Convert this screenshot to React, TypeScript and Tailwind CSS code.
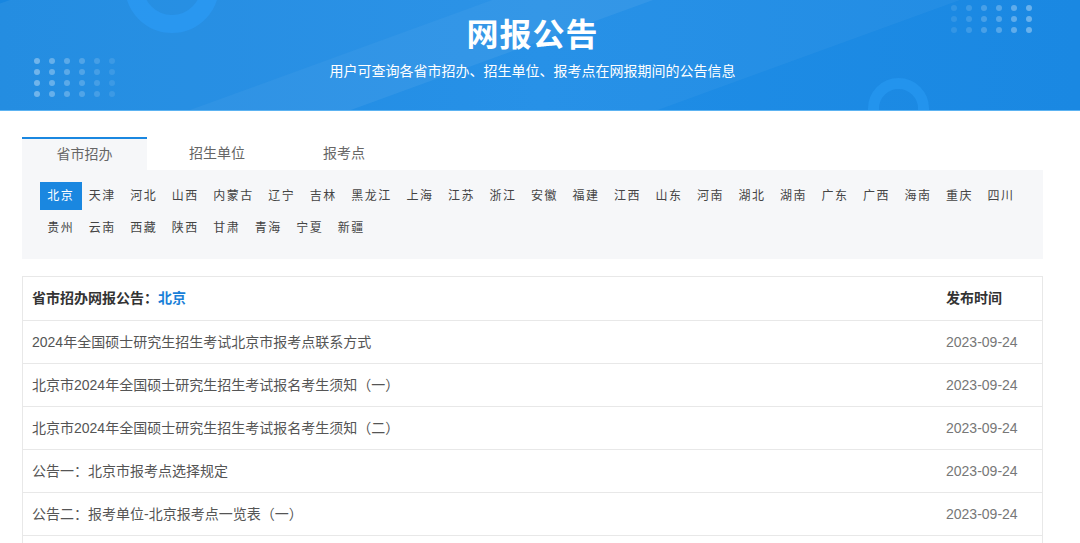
const provincesRow1 = ['北京', '天津', '河北', '山西', '内蒙古', '辽宁', '吉林', '黑龙江', '上海', '江苏', '浙江', '安徽', '福建', '江西', '山东', '河南', '湖北', '湖南', '广东', '广西', '海南', '重庆', '四川'];
const provincesRow2 = ['贵州', '云南', '西藏', '陕西', '甘肃', '青海', '宁夏', '新疆'];

const notices = [
  '2024年全国硕士研究生招生考试北京市报考点联系方式',
  '北京市2024年全国硕士研究生招生考试报名考生须知（一）',
  '北京市2024年全国硕士研究生招生考试报名考生须知（二）',
  '公告一：北京市报考点选择规定',
  '公告二：报考单位-北京报考点一览表（一）',
  '公告三：报考单位-北京报考点一览表（二）',
];

function Dots({ rows, cols, fade }: { rows: number; cols: number; fade: 'right' | 'left' }) {
  return (
    <div className="grid gap-x-[9px] gap-y-[5px]" style={{ gridTemplateColumns: `repeat(${cols}, 6px)` }}>
      {Array.from({ length: rows * cols }).map((_, i) => {
        const c = i % cols;
        const t = fade === 'right' ? c / (cols - 1) : 1 - c / (cols - 1);
        return <span key={i} className="w-[6px] h-[6px] rounded-full bg-white" style={{ opacity: 0.35 - t * 0.25 }} />;
      })}
    </div>
  );
}

export default function App() {
  return (
    <div className="min-h-[543px] bg-white font-['Liberation_Sans','Noto_Sans_CJK_SC',sans-serif]">
      <header className="relative h-[111px] overflow-hidden bg-gradient-to-r from-[#1786e0] via-[#1f8de6] to-[#1a88e2] border-b border-[#5cb3f2]">
        {/* light diagonal band */}
        <div className="absolute left-[-100px] top-[40px] w-[1400px] h-[220px] bg-white/[0.06] -rotate-[20deg] origin-top-left" />
        <div className="absolute left-[80px] top-[150px] w-[1300px] h-[160px] bg-white/[0.04] -rotate-[20deg] origin-top-left" />
        {/* rings */}
        <div className="absolute left-[125px] top-[-61px] w-[94px] h-[94px] rounded-full border-[18px] border-[#2a98f2]/80" />
        <div className="absolute left-[868px] top-[78px] w-[61px] h-[61px] rounded-full border-[11px] border-[#2596ef]/80" />
        {/* dots */}
        <div className="absolute left-[34px] top-[58px]">
          <Dots rows={4} cols={6} fade="right" />
        </div>
        <div className="absolute left-[951px] top-[-6px]">
          <Dots rows={4} cols={6} fade="left" />
        </div>
        <div className="relative flex flex-col items-center pt-[14px] pr-[15px]">
          <h1 className="text-[32px] leading-[42px] font-bold text-white tracking-[1px]">网报公告</h1>
          <p className="mt-[5px] text-[14px] leading-[20px] text-white">用户可查询各省市招办、招生单位、报考点在网报期间的公告信息</p>
        </div>
      </header>

      <div className="mx-[22px] mt-[26px] w-[1021px]">
        <div className="flex h-[33px] text-[14px] text-[#666]">
          <div className="w-[125px] flex items-center justify-center bg-[#f6f7f9] border-t-2 border-[#1a87e0]">省市招办</div>
          <div className="w-[140px] flex items-center justify-center">招生单位</div>
          <div className="w-[114px] flex items-center justify-center">报考点</div>
        </div>
        <div className="bg-[#f6f7f9] pl-[18px] pt-[12px] pb-[17px] text-[12px] text-[#444] flex flex-col gap-[4px]">
          <div className="flex">
            {provincesRow1.map((p) => (
              <span
                key={p}
                className={`h-[28px] px-[7.25px] tracking-[1.5px] flex items-center ${p === '北京' ? 'bg-[#1a87e0] text-white' : ''}`}
              >
                {p}
              </span>
            ))}
          </div>
          <div className="flex">
            {provincesRow2.map((p) => (
              <span key={p} className="h-[28px] px-[7.25px] tracking-[1.5px] flex items-center">
                {p}
              </span>
            ))}
          </div>
        </div>

        <div className="mt-[17px] border border-[#e8e8e8] text-[14px]">
          <div className="flex h-[43px] items-center pl-[9px] font-bold text-[#333]">
            <div className="flex-1">
              省市招办网报公告：<span className="text-[#1a7fd8]">北京</span>
            </div>
            <div className="w-[96px]">发布时间</div>
          </div>
          {notices.map((n) => (
            <div key={n} className="flex h-[43px] items-center pl-[9px] border-t border-[#e8e8e8]">
              <div className="flex-1 text-[#555]">{n}</div>
              <div className="w-[96px] text-[#777]">2023-09-24</div>
            </div>
          ))}
        </div>
      </div>
    </div>
  );
}
